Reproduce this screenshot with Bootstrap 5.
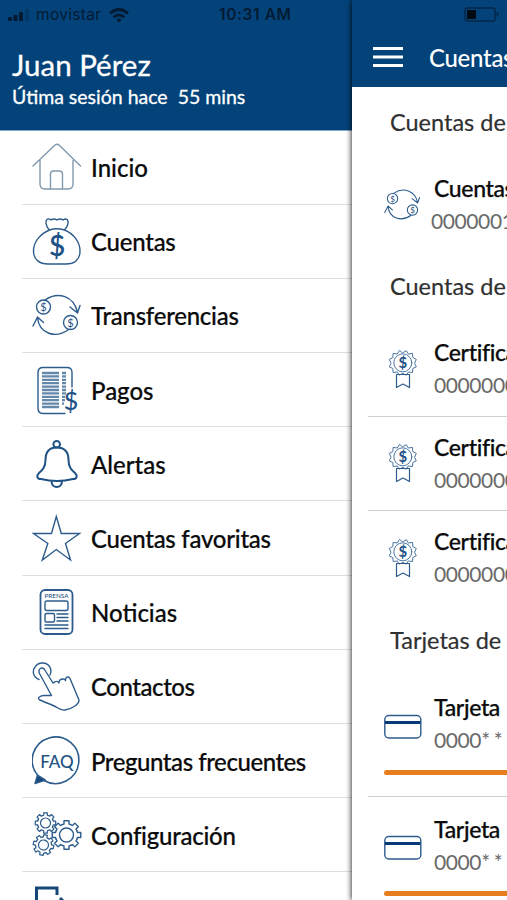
<!DOCTYPE html>
<html lang="es">
<head>
<meta charset="utf-8">
<meta name="viewport" content="width=device-width, initial-scale=1">
<title>Menú</title>
<link href="https://cdn.jsdelivr.net/npm/bootstrap@5.3.0/dist/css/bootstrap.min.css" rel="stylesheet">
<style>
body{font-family:Lato,"Liberation Sans",sans-serif;width:507px;height:900px;overflow:hidden;background:#fff;color:#0b0b0b}
.screen{height:900px}
.drawer{width:352px}
.drawer-head{height:130.5px;background:#03437a;border-bottom:1px solid #7fa9cf}
.status{height:30px;color:#041a33;font-family:Inter,sans-serif;font-size:15.5px}
.carrier{width:183px;padding-left:8px}
.carrier-name{letter-spacing:.3px}
.user{font-size:29.5px;line-height:36px;padding:17px 0 0 12px;-webkit-text-stroke:.3px #fff}
.session{font-size:19.5px;line-height:26px;padding:1px 0 0 12px;white-space:pre;-webkit-text-stroke:.3px #fff}
.entry{height:74.2px;margin-left:22px;padding-left:10px;border-bottom:1.5px solid #dedfe0;font-size:24px;font-weight:500;-webkit-text-stroke:.2px #0b0b0b}
.entry span{padding-top:2px}
.entry svg{width:50px;height:50px;margin-right:9px;flex:none;-webkit-text-stroke:0}
.ls-1{letter-spacing:-.25px}
.ls-2{letter-spacing:-.45px}
.line-icon{fill:none;stroke:#2d5c8c;stroke-width:1.4;stroke-linecap:round;stroke-linejoin:round}
.line-icon text,symbol text{fill:#1f5285;stroke:none}
.main-panel{width:155px;background:#fff;box-shadow:-1px 0 5px rgba(0,0,0,.75);z-index:2}
.main-head{height:87px;background:#03437a;font-size:24px;font-weight:500;letter-spacing:-.3px}
.title-bar{height:57px;padding:0 0 2px 21px}
.battery{padding-left:112px}
.group-title{height:70.6px;padding-left:38px;font-size:23.5px;color:#303030;-webkit-text-stroke:.2px #303030}
.product{height:94.2px;margin-left:16px;padding-left:16px}
.product.ruled{border-bottom:1.5px solid #cfcfcf}
.product.tall{height:121.6px}
.product svg{width:38px;height:46px;flex:none;margin-right:12px}
.p-name{font-size:23px;line-height:32px;padding-top:1px;font-weight:500;letter-spacing:-.35px;-webkit-text-stroke:.25px #0b0b0b}
.p-num{font-size:21px;line-height:34px;color:#6a6a6a;letter-spacing:-.4px}
.stars{letter-spacing:3.6px}
.card-line{height:94.2px;padding-top:2px}
.card-line svg{margin-top:6px}
.meter{height:5px;background:#e77e1e;border-radius:3px 0 0 3px}
</style>
<script src="https://cdn.jsdelivr.net/npm/bootstrap@5.3.0/dist/js/bootstrap.bundle.min.js"></script>
</head>
<body>
<svg width="0" height="0" class="position-absolute">
  <defs>
    <path id="tooth" d="M-3.1-7.4L-1.8-7.8V-10.2H1.8V-7.8L3.1-7.4"/>
    <g id="gear"><use href="#tooth"/><use href="#tooth" transform="rotate(45)"/><use href="#tooth" transform="rotate(90)"/><use href="#tooth" transform="rotate(135)"/><use href="#tooth" transform="rotate(180)"/><use href="#tooth" transform="rotate(225)"/><use href="#tooth" transform="rotate(270)"/><use href="#tooth" transform="rotate(315)"/><circle r="5"/></g>
    <symbol id="swap" viewBox="0 0 50 50"><circle cx="11.500" cy="17" r="7"/><circle cx="38.500" cy="32.500" r="7"/><path d="M13 10C26 1 42 6 45.500 22.500M38 17l7.500 6L48 15.500M36.500 39.500C24 49 7 44 5.500 27.500M1 36l4.500-9 6 5.500"/><text x="11.500" y="21" font-size="11" font-weight="400" text-anchor="middle">$</text><text x="38.500" y="36.500" font-size="11" font-weight="400" text-anchor="middle">$</text></symbol>
    <symbol id="medal" viewBox="0 0 38 46"><path d="M18.500 7L22 5l2 3.300 4.200-.6.300 4.200 3.500 1.800-1.700 3.800 1.700 3.700-3.500 1.600-.3 4-4.200-.5-2 3.200-3.500-1.900-3.500 1.900-2-3.200-4.200.5-.3-4L5 21.200l1.700-3.700L5 13.700l3.500-1.800.3-4.200 4.200.6L15 5z" transform="translate(.3 -.3)" stroke-width="1" stroke="#4a74a0"/><circle cx="18.800" cy="16.800" r="9" stroke-width="1" stroke="#4a74a0"/><path d="M12.500 28.500v13l6.500-3.500 6.500 3.500v-13z" stroke-width="1.200"/><text x="18.800" y="21.800" font-size="15" font-weight="700" text-anchor="middle">$</text></symbol>
    <symbol id="credit" viewBox="0 0 38 46"><rect x=".8" y="11.500" width="36" height="22.500" rx="4"/><path d="M1 18.500h35.500" stroke="#063b78" stroke-width="3" stroke-linecap="butt"/></symbol>
  </defs>
</svg>
<div class="screen d-flex">
  <aside class="drawer flex-shrink-0 overflow-hidden">
    <header class="drawer-head text-white">
      <div class="status d-flex align-items-center">
        <div class="carrier d-flex align-items-center me-auto">
          <svg width="24" height="12" class="me-1" fill="#041a33"><rect y="8" width="4" height="4" rx="1"/><rect x="5.500" y="6" width="4" height="6" rx="1"/><rect x="11" y="3" width="4" height="9" rx="1"/><rect x="17" width="4" height="12" rx="1" opacity=".25"/></svg>
          <span class="carrier-name">movistar</span>
          <svg width="20" height="15" viewBox="0 0 20 15" class="ms-2" fill="none" stroke="#041a33" stroke-width="2.800"><path d="M1 5.500Q10-2.500 19 5.500M4.500 9.300q5.500-4.600 11 0"/><path d="M7.200 11.500q2.800-2 5.600 0L10 14.500z" fill="#041a33" stroke="none"/></svg>
        </div>
        <span class="clock fw-semibold" style="width:133px;letter-spacing:.6px">10:31 AM</span>
      </div>
      <div class="user">Juan Pérez</div>
      <div class="session">Útima sesión hace  55 mins</div>
    </header>
    <nav>
      <div class="entry d-flex align-items-center"><svg class="line-icon" viewBox="0 0 50 50" style="stroke:#8299ae"><path d="M1 24L23 3q2-1.500 4 0L48.500 24M8 18.500V42q0 5 5 5h23q5 0 5-5V18.500M18.500 47V32q0-3 3-3h6q3 0 3 3v15"/></svg><span>Inicio</span></div>
      <div class="entry d-flex align-items-center"><svg class="line-icon" viewBox="0 0 50 50"><path d="M17.500 14C14 11 13 5 15 3.500q2-1.500 4 .5 3-2 6 0 3-2 6 0 2.500-2 4.500 0C37 7 35 11 32.500 14M17.500 14q7-2.500 15 0C42 18 48 26 48 35c0 9-6 13-14 13H16C8 48 1.500 44 1.500 35c0-9 6.500-17 16-21z"/><text x="25" y="40" font-size="28" font-weight="600" text-anchor="middle">$</text></svg><span class="ls-1">Cuentas</span></div>
      <div class="entry d-flex align-items-center"><svg class="line-icon"><use href="#swap"/></svg><span class="ls-1">Transferencias</span></div>
      <div class="entry d-flex align-items-center"><svg class="line-icon" viewBox="0 0 50 50"><path d="M40 22V7.500q0-5-5-5H11q-5 0-5 5V43q0 5.500 5 5.500h22"/><path d="M10 8h17M10 11.400h17M10 14.800h17M10 18.200h17M10 21.600h17M10 25h17M10 28.400h17M10 31.800h17M10 35.200h17M10 38.600h17M10 42h17M30 8h4M30 11.400h4M30 14.800h4M30 18.200h4M30 21.600h4M30 25h4M30 28.400h4M30 31.800h3M30 35.200h3M30 38.600h2" stroke-linecap="butt" stroke-width="2.300" stroke="#6488aa"/><text x="39" y="44.500" font-size="25" text-anchor="middle">$</text></svg><span>Pagos</span></div>
      <div class="entry d-flex align-items-center"><svg class="line-icon" viewBox="0 0 50 50" style="stroke-width:2;stroke:#1f5285"><circle cx="24.700" cy="5.300" r="3.300"/><path d="M24.700 8.500C16 8.500 13.500 14 13.500 21c0 7-3 10-6.500 13-3 3-2 6 2 6 10 2.500 22 2.500 32 0 4 0 5-3 2-6-3.500-3-6.500-6-6.500-13C36.500 14 33.500 8.500 24.700 8.500zM19.500 42c0 8 10.500 8 10.500 0"/></svg><span>Alertas</span></div>
      <div class="entry d-flex align-items-center"><svg class="line-icon" viewBox="0 0 50 50"><path stroke-linejoin="miter" d="M24.300 3.500l5 17H47.500L33.500 30.500 38.500 47 24.300 36.500 10.300 47l5.500-16.500L1.500 20.500h18z"/></svg><span class="ls-1">Cuentas favoritas</span></div>
      <div class="entry d-flex align-items-center"><svg class="line-icon" viewBox="0 0 50 50"><rect x="8.500" y="3" width="32" height="44" rx="4.500" stroke-width="1.800"/><rect x="13" y="14" width="23" height="9.500" rx="2"/><rect x="13" y="26.500" width="9.500" height="8.500" rx="1.500"/><path d="M25 27h11M25 30.500h11M25 34h11M13 38h23M13 41.500h23"/><text x="24.500" y="11.200" font-size="6.300" text-anchor="middle">PRENSA</text></svg><span>Noticias</span></div>
      <div class="entry d-flex align-items-center"><svg class="line-icon" viewBox="0 0 50 50"><path d="M7 18.500C1 16 0 10 3 6c4-6 13-5 15.500 1.500q1 3.500-.5 6.500"/><path d="M19.500 34.500L7.500 12.500C5.500 8 10 5 12.500 8.500L21 22l1-.5q3-2.500 5 .5 0-4 4-4 2 0 2.500 1.500 0-4 3-3.500l1.500 1.500L47 39c0 5-8 9-14 10-3 .5-5-.5-8-2.500-5-3-12-5-17-7.500-4-2 1-4.500 4-4.500z"/></svg><span class="ls-2">Contactos</span></div>
      <div class="entry d-flex align-items-center"><svg class="line-icon" viewBox="0 0 50 50"><path d="M5.500 39A23.300 23.300 0 1 1 12 44.500" stroke-width="1.600"/><path d="M5.500 39L3 47.500l10.500-3.300z" fill="#174a80"/><text x="25" y="31.500" font-size="17" text-anchor="middle">FAQ</text></svg><span class="ls-2">Preguntas frecuentes</span></div>
      <div class="entry d-flex align-items-center"><svg class="line-icon" viewBox="0 0 50 50" style="stroke-width:1.200"><use href="#gear" transform="translate(13.500 13)"/><use href="#gear" transform="translate(11.500 35) rotate(12)"/><use href="#gear" transform="translate(34.500 25) scale(1.400)" stroke-width="1"/></svg><span class="ls-1">Configuración</span></div>
      <div class="entry d-flex align-items-center"><svg class="line-icon" viewBox="0 0 50 50" style="stroke-width:3;stroke:#164578;stroke-linecap:butt;stroke-linejoin:miter"><path d="M25 11V4H4.500V47H25V39M28 14l11 11-11 11M39 25H14"/></svg><span class="pt-1">Salir</span></div>
    </nav>
  </aside>
  <main class="main-panel flex-shrink-0 overflow-hidden text-nowrap">
    <header class="main-head text-white">
      <div class="status battery d-flex align-items-center"><svg width="36" height="16" fill="none" stroke="#04264a"><rect x="1" y="1" width="30" height="13" rx="2.500" stroke-width="1.500"/><rect x="3" y="3" width="9" height="9" fill="#020a14" stroke="none"/><path d="M33.500 5.500v4" stroke-width="2"/></svg></div>
      <div class="title-bar d-flex align-items-center"><svg width="30" height="22" class="flex-shrink-0" stroke="#fff" stroke-width="3"><path d="M0 1.500h30M0 10h30M0 18.500h30"/></svg><span style="margin-left:26px">Cuentas</span></div>
    </header>
    <div class="group-title d-flex align-items-center">Cuentas de</div>
    <div class="product d-flex align-items-center"><svg class="line-icon" viewBox="0 0 38 46"><use href="#swap" x="0" y="4" width="37" height="37"/></svg><div><div class="p-name">Cuentas</div><div class="p-num" style="margin-left:-3px">00000010</div></div></div>
    <div class="group-title d-flex align-items-center">Cuentas de</div>
    <div class="product ruled d-flex align-items-center"><svg class="line-icon"><use href="#medal"/></svg><div><div class="p-name">Certificado</div><div class="p-num">00000000</div></div></div>
    <div class="product ruled d-flex align-items-center"><svg class="line-icon"><use href="#medal"/></svg><div><div class="p-name">Certificado</div><div class="p-num">00000000</div></div></div>
    <div class="product d-flex align-items-center"><svg class="line-icon"><use href="#medal"/></svg><div><div class="p-name">Certificado</div><div class="p-num">00000000</div></div></div>
    <div class="group-title d-flex align-items-center">Tarjetas de</div>
    <div class="product tall ruled"><div class="card-line d-flex align-items-center"><svg class="line-icon"><use href="#credit"/></svg><div><div class="p-name">Tarjeta</div><div class="p-num">0000<span class="stars">****</span></div></div></div><div class="meter"></div></div>
    <div class="product tall"><div class="card-line d-flex align-items-center"><svg class="line-icon"><use href="#credit"/></svg><div><div class="p-name">Tarjeta</div><div class="p-num">0000<span class="stars">****</span></div></div></div><div class="meter"></div></div>
  </main>
</div>
</body>
</html>
